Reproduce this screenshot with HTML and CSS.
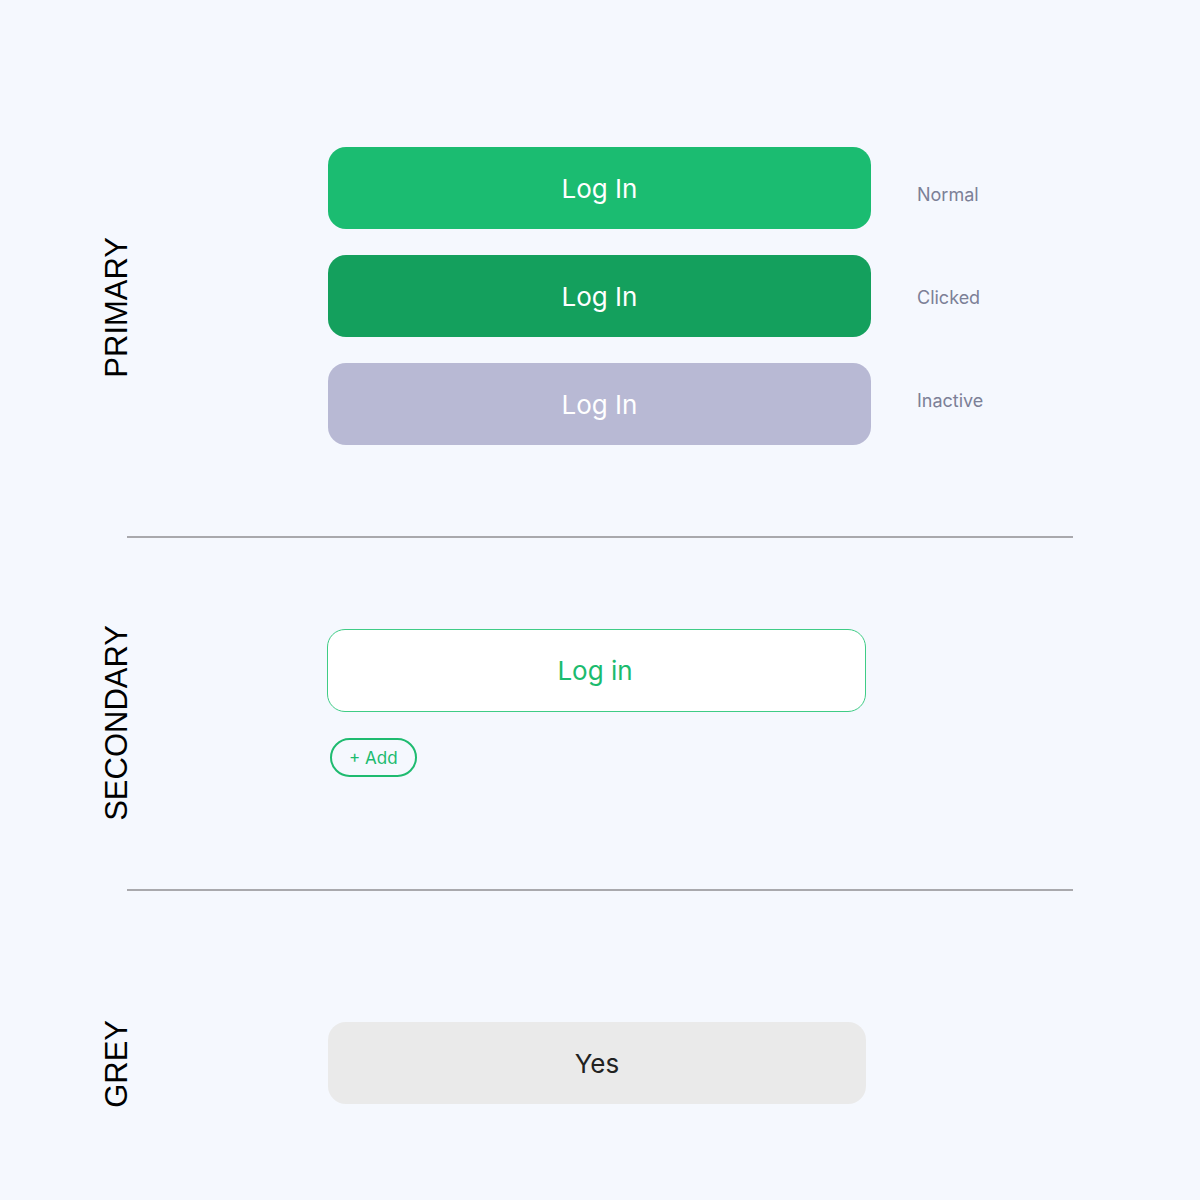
FILE: index.html
```html
<!DOCTYPE html>
<html lang="en">
<head>
    <meta charset="UTF-8">
    <meta name="viewport" content="width=device-width, initial-scale=1.0">
    <title>Buttons</title>
    <link rel="stylesheet" href="styles.css">
</head>
<body>
    <div class="page">
        <section class="section section-primary">
            <div class="section-label">PRIMARY</div>
            <div class="section-content">
                <div class="state-row">
                    <button class="btn btn-primary">Log In</button>
                    <span class="state-name normal">Normal</span>
                </div>
                <div class="state-row">
                    <button class="btn btn-primary clicked">Log In</button>
                    <span class="state-name">Clicked</span>
                </div>
                <div class="state-row">
                    <button class="btn btn-primary inactive">Log In</button>
                    <span class="state-name inactive">Inactive</span>
                </div>
            </div>
        </section>

        <hr class="divider">

        <section class="section section-secondary">
            <div class="section-label">SECONDARY</div>
            <div class="section-content">
                <button class="btn btn-secondary">Log in</button>
                <button class="btn-add">+ Add</button>
            </div>
        </section>

        <hr class="divider">

        <section class="section section-grey">
            <div class="section-label">GREY</div>
            <div class="section-content">
                <button class="btn btn-grey">Yes</button>
            </div>
        </section>
    </div>
</body>
</html>
```

FILE: styles.css
```css
body {
    margin: 0;
    background: #f5f8fe;
    font-family: Inter, "Noto Sans", sans-serif;
}
.page {
    width: 1200px;
    height: 1200px;
}
.section {
    display: grid;
    grid-template-columns: 328px 1fr;
}
.section-label {
    writing-mode: vertical-rl;
    transform: rotate(180deg);
    font-family: "Liberation Sans", Arial, sans-serif;
    font-size: 31px;
    line-height: 31px;
    color: #000;
    margin-left: 101px;
    justify-self: start;
    align-self: start;
}
.section-content {
    display: flex;
    flex-direction: column;
    align-items: flex-start;
}

/* primary */
.section-primary {
    padding: 147px 0 91px;
}
.section-primary .section-label {
    margin-top: 90px;
}
.section-primary .section-content {
    gap: 26px;
}
.state-row {
    display: flex;
    align-items: center;
    gap: 46px;
}
.state-name {
    font-size: 18px;
    color: #7c8097;
    margin-top: 2px;
}
.state-name.normal {
    margin-top: 12px;
}
.state-name.inactive {
    margin-top: -8px;
}

/* buttons */
.btn {
    font-family: Inter, sans-serif;
    font-size: 26px;
    border: none;
    border-radius: 18px;
    height: 82px;
    cursor: pointer;
    padding: 0;
}
.btn-primary {
    width: 543px;
    background: #1bbc71;
    color: #fff;
}
.btn-primary.clicked {
    background: #14a05d;
}
.btn-primary.inactive {
    background: #b8b9d4;
}
.btn-secondary {
    width: 539px;
    height: 83px;
    background: #fff;
    color: #1bbb6e;
    border: 1px solid #3fcc86;
    margin-left: -1px;
    text-indent: -3px;
}
.btn-add {
    margin-top: 26px;
    margin-left: 2px;
    height: 39px;
    padding: 0 17px;
    border: 2px solid #1fbb70;
    border-radius: 20px;
    background: transparent;
    color: #1bbb6e;
    font-family: Inter, sans-serif;
    font-size: 17px;
    cursor: pointer;
}
.btn-grey {
    width: 538px;
    background: #eaeaea;
    color: #222;
}

.divider {
    margin: 0 127px;
    border: none;
    height: 2px;
    background: #a9a9ad;
}

/* secondary */
.section-secondary {
    padding: 91px 0 112px;
}
.section-secondary .section-label {
    margin-top: -4px;
    margin-bottom: -80px;
}

/* grey */
.section-grey {
    padding: 131px 0 0;
}
.section-grey .section-label {
    margin-top: -2px;
}
```
